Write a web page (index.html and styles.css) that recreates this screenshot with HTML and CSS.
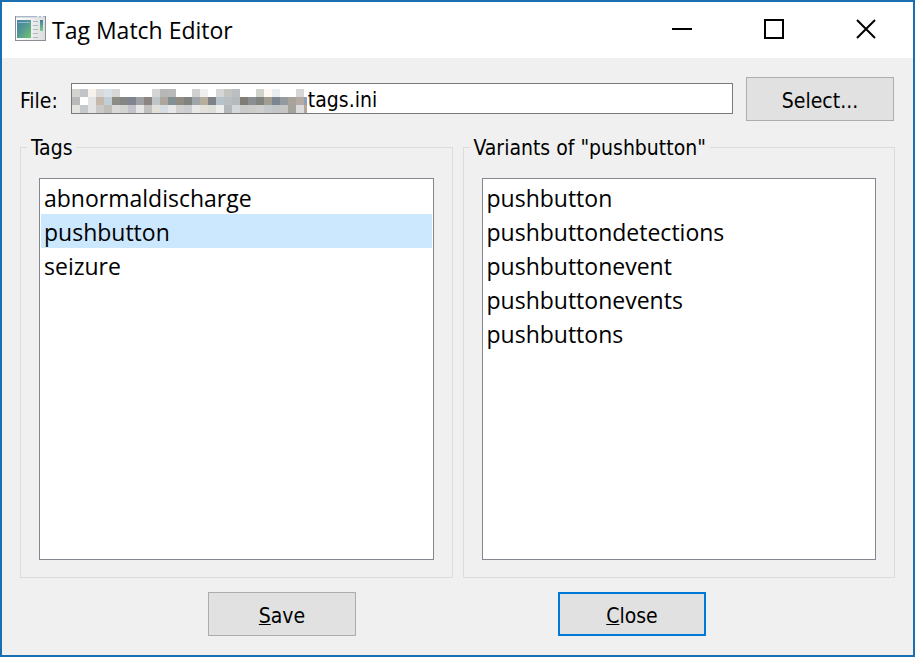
FILE: index.html
```html
<!DOCTYPE html>
<html lang="en">
<head>
<meta charset="utf-8">
<title>Tag Match Editor</title>
<link rel="stylesheet" href="styles.css">
</head>
<body>
<div class="window">
  <header class="titlebar">
    <svg class="app-icon" width="32" height="28" viewBox="0 0 32 28" aria-hidden="true">
      <defs>
        <linearGradient id="pane" x1="0" y1="0" x2="1" y2="1">
          <stop offset="0" stop-color="#4680a8"/><stop offset="0.5" stop-color="#559a92"/><stop offset="1" stop-color="#70c56c"/>
        </linearGradient>
        <linearGradient id="bar" x1="0" y1="0" x2="0" y2="1">
          <stop offset="0" stop-color="#3d7ea0"/><stop offset="1" stop-color="#7ccb84"/>
        </linearGradient>
        <linearGradient id="face" x1="0" y1="0" x2="1" y2="0">
          <stop offset="0" stop-color="#fff"/><stop offset="1" stop-color="#dcdee0"/>
        </linearGradient>
      </defs>
      <path fill="#8b8f95" d="M0 0h31v25H0z"/>
      <path fill="url(#face)" d="M1 2h29v22H1z"/>
      <path fill="#a9b8c8" d="M1 0h29v1H1z"/>
      <path fill="#d5dce4" d="M1 1h29v1H1z"/>
      <path fill="#eef1f4" d="M22 0h2v1h-2zM26 0h2v1h-2z"/>
      <path fill="url(#pane)" d="M2 4h14v18H2z"/>
      <path fill="#8fb6cc" d="M3 6h12v1H3z"/>
      <path stroke="#b4b7ba" d="M18 5.500h5M18 9.500h5M18 13.500h5M18 17.500h5M18 21.500h5"/>
      <path fill="url(#bar)" d="M25 4h3v11h-3z"/>
    </svg>
    <h1 class="title">Tag Match Editor</h1>
    <div class="controls">
      <button class="control" type="button" aria-label="Minimize"><svg width="20" height="20" viewBox="0 0 20 20"><path d="M0 10h20"/></svg></button>
      <button class="control" type="button" aria-label="Maximize"><svg width="20" height="20" viewBox="0 0 20 20"><path d="M1 1h18v18H1z"/></svg></button>
      <button class="control" type="button" aria-label="Close window"><svg width="20" height="20" viewBox="0 0 20 20"><path d="M1 1l18 18M19 1L1 19"/></svg></button>
    </div>
  </header>
  <main class="content">
    <div class="file-row">
      <label for="file">File:</label>
      <div class="file-field">
        <input id="file" class="file-input" type="text" value="tags.ini">
        <svg id="mosaic" class="mosaic" width="235" height="24" viewBox="0 0 235 24" shape-rendering="crispEdges" aria-hidden="true"></svg>
      </div>
      <button class="button" type="button">Select...</button>
    </div>
    <div class="groups">
      <fieldset class="group">
        <legend>Tags</legend>
        <ul class="list">
          <li>abnormaldischarge</li>
          <li class="selected">pushbutton</li>
          <li>seizure</li>
        </ul>
      </fieldset>
      <fieldset class="group">
        <legend>Variants of "pushbutton"</legend>
        <ul class="list">
          <li>pushbutton</li>
          <li>pushbuttondetections</li>
          <li>pushbuttonevent</li>
          <li>pushbuttonevents</li>
          <li>pushbuttons</li>
        </ul>
      </fieldset>
    </div>
    <div class="actions">
      <button class="button" type="button"><u>S</u>ave</button>
      <button class="button default" type="button"><u>C</u>lose</button>
    </div>
  </main>
</div>
<script src="mosaic.js"></script>
</body>
</html>
```
FILE: mosaic.js
```js
// Pixelated cover over the directory part of the path: three rows of 8px cells.
const rows = [
  "d3d3cf c1c5c8 f8f2ea d9d9d9 dae0e8 d6d8d6 fff fff fff fff d4d4d4 b7b7b7 b9bab8 fff fff d0d0d0 efefed fff d4d6d8 c4c4c0 bcbfc1 fff fff d0d2cc fdf8f2 e8edf1 fff fff d8d5d8 fff",
  "b9b9b9 fff e4e4e4 c4b9ac c2ced5 8f8c84 838684 7f8590 9fa0a2 8a8583 bec5c8 aca69f 829094 908c84 80837f 9fa5a8 b7ad9c 7f8387 b8c2c9 b9bfc1 b5bbbd 7f7d74 8b8f91 80837f a39c92 7d8590 949b9f a8a49c b5aba6 8fa0b8",
  "e4e5e0 c5c9cb e4e4e4 cccac6 bfbeb8 d8d9d8 d2d4d2 c2c2c8 e6e6e6 c2c0bf e2dfd8 d5dce4 e7e7e7 d2d0ce cbcdd0 e8e8e8 e3e0db dfdfda eeeeee b4b6ba d3d7da cacaca cccccb cfcfcf c6c9cb c2c5c8 c5c6c4 a5a49c dcdcdc b5a79c"
];
const mosaic = document.getElementById("mosaic");
rows.forEach((row, y) => {
  row.split(" ").forEach((color, x) => {
    const cell = document.createElementNS("http://www.w3.org/2000/svg", "rect");
    cell.setAttribute("x", x * 8);
    cell.setAttribute("y", y * 8);
    cell.setAttribute("width", 8);
    cell.setAttribute("height", 8);
    cell.setAttribute("fill", "#" + color);
    mosaic.appendChild(cell);
  });
});
```
FILE: styles.css
```css
* { box-sizing: border-box; }
body { margin: 0; font: 21px/28px "DejaVu Sans Condensed", "DejaVu Sans", sans-serif; color: #000; }
.window { min-height: 100vh; display: flex; flex-direction: column; border: 2px solid #1a6fb0; background: #f0f0f0; }
.titlebar { display: flex; align-items: center; height: 56px; padding: 0 1px 0 13px; background: #fff; }
.app-icon { flex: none; }
.title { flex: 1; margin: 0 0 0 5px; font: 23px/32px "Open Sans", "Noto Sans", sans-serif; }
.controls { display: flex; }
.control { display: grid; place-items: center; width: 92px; height: 56px; padding: 0 0 2px; border: 0; background: none; }
.control svg { fill: none; stroke: #000; stroke-width: 2; }
.content { flex: 1; display: flex; flex-direction: column; padding: 19px 19px 19px 18px; }
.file-row { display: flex; align-items: center; gap: 13px; }
.file-row label { padding-top: 3px; }
.file-field { position: relative; flex: 1; display: flex; margin-bottom: 1px; }
.file-input { width: 100%; height: 31px; padding: 3px 0 0 236px; border: 1px solid #7a7a7a; background: #fff; font: inherit; color: inherit; }
.mosaic { position: absolute; left: 1px; bottom: 1px; }
.button { width: 148px; height: 44px; padding: 3px 0 0; border: 1px solid #adadad; background: #e1e1e1; font: inherit; color: inherit; }
.button u { text-decoration-thickness: 1px; }
.default { border: 2px solid #0078d7; }
.groups { flex: 1; display: grid; grid-template-columns: 1fr 1fr; gap: 10px; margin: 12px -1px 0 0; }
.group { display: flex; min-width: 0; margin: 0; padding: 17px 18px; border: 1px solid #dcdcdc; }
.group legend { margin-left: -12px; padding: 2px 4px 0; line-height: 26px; }
.list { flex: 1; margin: 0; padding: 1px; border: 1px solid #828790; background: #fff; list-style: none; font: 23px/32px "Open Sans", "Noto Sans", sans-serif; }
.list li { padding: 2px 3px 0; }
.list .selected { background: #cce8ff; }
.actions { display: flex; justify-content: space-evenly; gap: 14px; margin-top: 14px; }
```
